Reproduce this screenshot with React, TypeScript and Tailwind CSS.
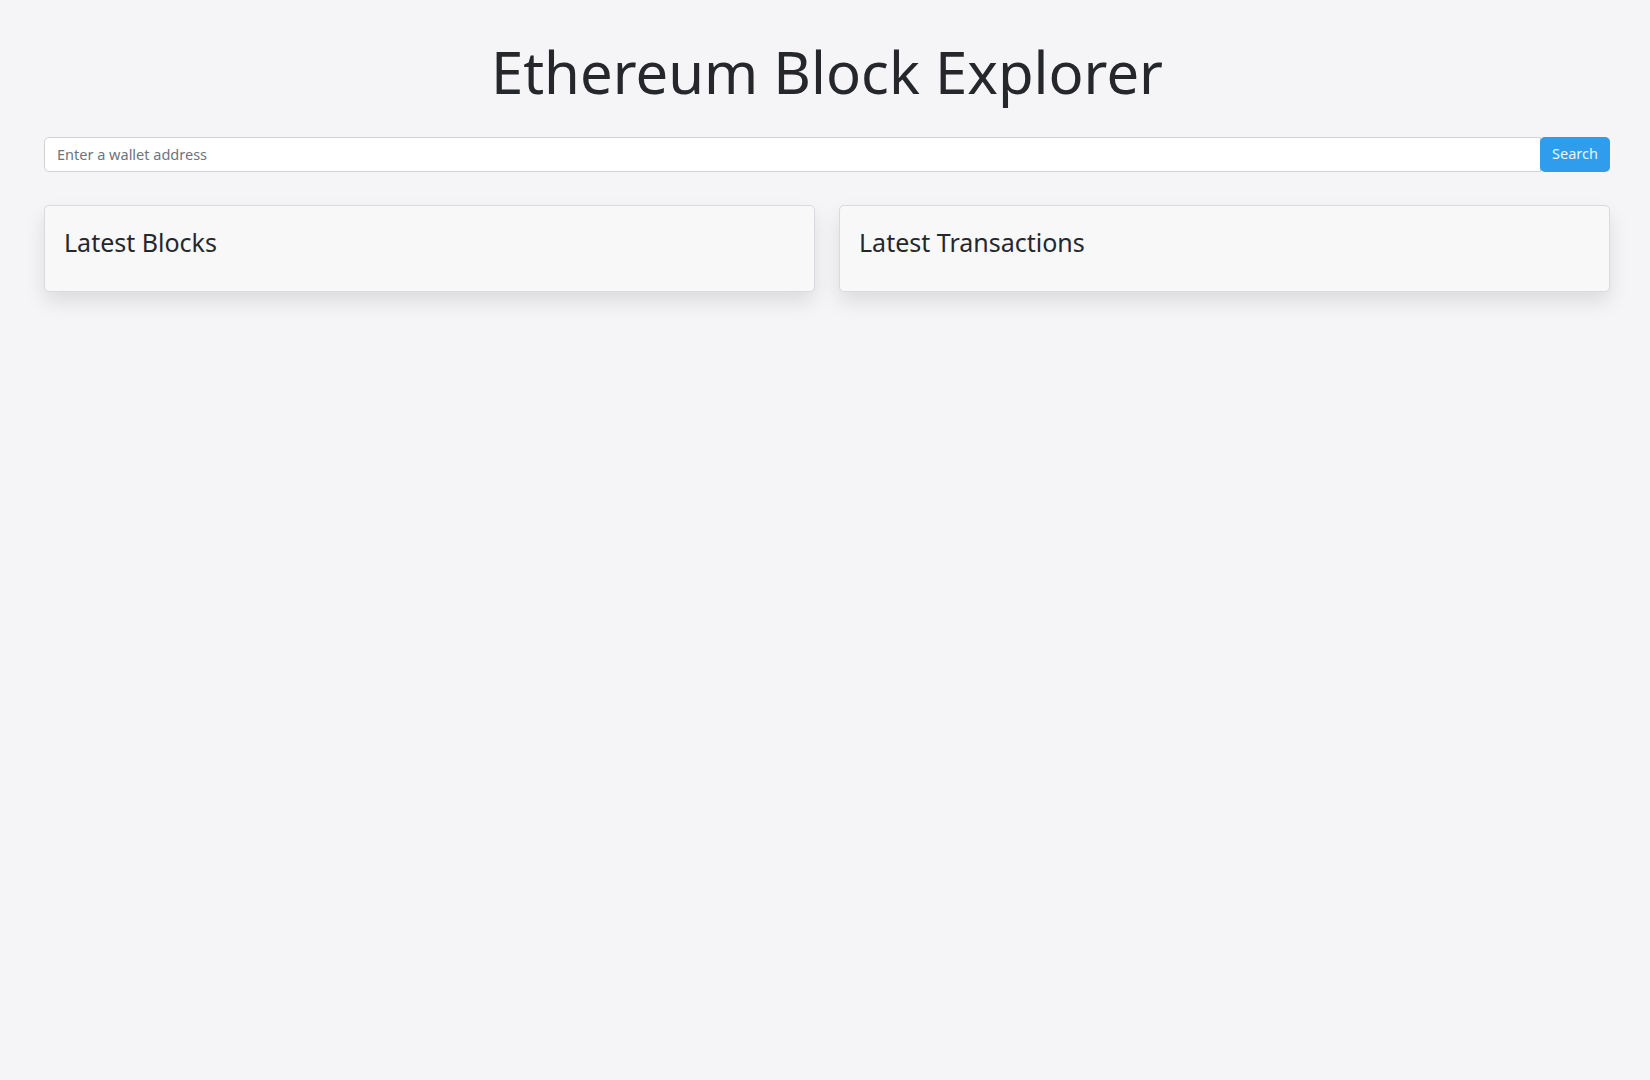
import { useState } from "react";

export default function App() {
  const [address, setAddress] = useState("");

  return (
    <div className="min-h-screen bg-[#f5f4f7] text-[#25272b] font-['Noto_Sans',sans-serif] pl-[44px] pr-[40px] pt-[37px]">
      {/* TITLE */}
      <h1 className="text-center text-[58px] leading-[1.2] font-normal">Ethereum Block Explorer</h1>

      {/* SEARCH */}
      <div className="mt-[30px] flex h-[35px]">
        <input
          value={address}
          onChange={(e) => setAddress(e.target.value)}
          placeholder="Enter a wallet address"
          className="flex-1 bg-white border border-[#cfd2d6] rounded-l-[5px] px-3 pt-[1px] text-[14.5px] text-[#25272b] placeholder:text-[#6c757d] outline-none"
        />
        <button className="w-[70px] -ml-[1px] bg-[#2f9deb] text-white/90 text-[14.5px] rounded-[5px]">Search</button>
      </div>

      {/* CARDS */}
      <div className="mt-[33px] grid grid-cols-2 gap-6">
        {["Latest Blocks", "Latest Transactions"].map((title) => (
          <div
            key={title}
            className="h-[87px] bg-[#f8f8f9] border border-[#d9d9e0] rounded-[5px] px-[19px] pt-[18px] shadow-[0_10px_20px_rgba(0,0,0,0.1)]"
          >
            <h4 className="text-[25px] leading-[1.5]">{title}</h4>
          </div>
        ))}
      </div>
    </div>
  );
}
